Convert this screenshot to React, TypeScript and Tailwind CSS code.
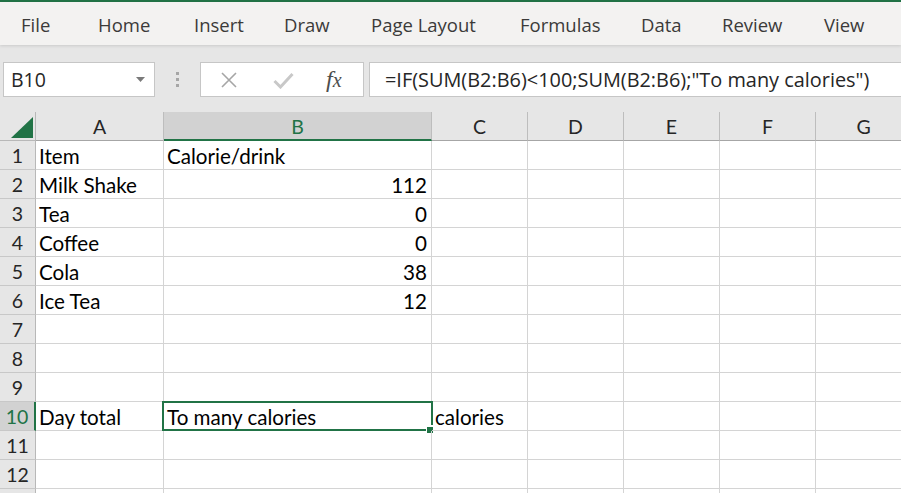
import React from "react";

const UI = { fontFamily: '"Open Sans", "Noto Sans", sans-serif' };
const CELL = { fontFamily: 'Lato, "Noto Sans", sans-serif' };

const tabs: [string, number][] = [
  ["File", 77],
  ["Home", 96],
  ["Insert", 90],
  ["Draw", 87],
  ["Page Layout", 149],
  ["Formulas", 121],
  ["Data", 81],
  ["Review", 102],
  ["View", 60],
];

const colW: Record<string, string> = {
  A: "w-[128px]",
  B: "w-[268px]",
  C: "w-[96px]",
  D: "w-[96px]",
  E: "w-[96px]",
  F: "w-[96px]",
  G: "w-[96px]",
};
const cols = ["A", "B", "C", "D", "E", "F", "G"];

type Row = { a?: string; b?: string; bNum?: boolean; c?: string };
const rows: Row[] = [
  { a: "Item", b: "Calorie/drink" },
  { a: "Milk Shake", b: "112", bNum: true },
  { a: "Tea", b: "0", bNum: true },
  { a: "Coffee", b: "0", bNum: true },
  { a: "Cola", b: "38", bNum: true },
  { a: "Ice Tea", b: "12", bNum: true },
  {},
  {},
  {},
  { a: "Day total", b: "To many calories", c: "calories" },
  {},
  {},
  {},
];

export default function App() {
  return (
    <div className="w-[901px] h-[493px] overflow-hidden bg-white flex flex-col">
      {/* top accent */}
      <div className="h-[2px] bg-[#217346] shrink-0" />
      {/* ribbon tabs */}
      <div
        className="h-[43px] shrink-0 bg-[#f3f2f1] flex items-center pl-[21px] pt-[3px] text-[18.5px] text-[#3b3a39] relative z-10 shadow-[0_1px_3px_rgba(0,0,0,0.12)]"
        style={UI}
      >
        {tabs.map(([t, w]) => (
          <div key={t} className="shrink-0 whitespace-nowrap" style={{ width: w }}>
            {t}
          </div>
        ))}
      </div>
      {/* formula bar */}
      <div className="h-[67px] shrink-0 bg-[#e6e6e6] flex items-start pt-[17px] pl-[3px]" style={UI}>
        <div className="w-[152px] h-[35px] bg-white border border-[#c6c6c6] flex items-center justify-between pl-[7px] pr-[9px] shrink-0">
          <span className="text-[19.5px] text-[#262626]">B10</span>
          <svg width="9" height="5" viewBox="0 0 9 5">
            <path d="M0 0 L9 0 L4.5 5 Z" fill="#7a7a7a" />
          </svg>
        </div>
        <div className="w-[45px] h-[35px] flex flex-col items-center justify-center gap-[3px] shrink-0">
          <div className="w-[3px] h-[3px] bg-[#a6a6a6]" />
          <div className="w-[3px] h-[3px] bg-[#a6a6a6]" />
          <div className="w-[3px] h-[3px] bg-[#a6a6a6]" />
        </div>
        <div className="w-[164px] h-[35px] bg-white border border-[#c6c6c6] flex items-center shrink-0 relative">
          <svg className="absolute left-[20px] top-[9px]" width="16" height="16" viewBox="0 0 16 16">
            <path d="M1 1 L15 15 M15 1 L1 15" stroke="#a6a6a6" strokeWidth="1.6" fill="none" />
          </svg>
          <svg className="absolute left-[72px] top-[9px]" width="21" height="17" viewBox="0 0 21 17">
            <path d="M1.5 9 L7.5 15 L19.5 2" stroke="#c8c8c8" strokeWidth="3" fill="none" />
          </svg>
          <span
            className="absolute left-[125px] top-[1px] text-[24px] italic text-[#4d4d4d] leading-[30px]"
            style={{ fontFamily: '"Liberation Serif", "DejaVu Serif", serif' }}
          >
            <span className="italic">f</span>
            <span className="text-[20px]">x</span>
          </span>
        </div>
        <div className="ml-[5px] flex-1 h-[35px] bg-white border border-[#c6c6c6] border-r-0 flex items-center pl-[15px] text-[19.9px] text-[#262626] whitespace-nowrap overflow-hidden">
          =IF(SUM(B2:B6)&lt;100;SUM(B2:B6);"To many calories")
        </div>
      </div>
      {/* sheet */}
      <div className="flex-1 bg-white overflow-hidden" style={CELL}>
        {/* header row */}
        <div className="flex h-[29px] bg-[#e6e6e6]">
          <div className="w-[36px] shrink-0 border-r border-b border-[#b8b8b8] relative">
            <svg className="absolute left-[11px] top-[5px]" width="22" height="21" viewBox="0 0 22 21">
              <path d="M0 21 L22 21 L22 0 Z" fill="#217346" />
            </svg>
          </div>
          {cols.map((c) => {
            const sel = c === "B";
            return (
              <div
                key={c}
                className={`${colW[c]} shrink-0 flex items-center justify-center pt-[2px] text-[19.5px] border-r border-[#bdbdbd] ${
                  sel
                    ? "bg-[#d2d2d2] text-[#217346] border-b-2 border-b-[#217346]"
                    : "text-[#262626] border-b border-b-[#a6a6a6]"
                }`}
              >
                {c}
              </div>
            );
          })}
          <div className="flex-1 border-b border-b-[#a6a6a6]" />
        </div>
        {rows.map((r, i) => {
          const n = i + 1;
          const sel = n === 10;
          return (
            <div key={n} className="flex h-[29px]">
              <div
                className={`w-[36px] shrink-0 flex items-center justify-center pt-[2px] text-[19.5px] border-b border-b-[#c8c8c8] ${
                  sel
                    ? "bg-[#d2d2d2] text-[#217346] border-r-2 border-r-[#217346]"
                    : "bg-[#e6e6e6] text-[#262626] border-r border-r-[#b8b8b8]"
                }`}
              >
                {n < 13 ? n : ""}
              </div>
              {cols.map((c) => {
                let content: string | undefined;
                let right = false;
                if (c === "A") content = r.a;
                if (c === "B") {
                  content = r.b;
                  right = !!r.bNum;
                }
                if (c === "C") content = r.c;
                const isSel = sel && c === "B";
                return (
                  <div
                    key={c}
                    className={`${colW[c]} shrink-0 border-r border-b border-[#d4d4d4] flex items-center pt-[3px] text-[20.6px] text-black whitespace-nowrap relative ${
                      right ? "justify-end pr-[4px]" : "pl-[3px]"
                    }`}
                  >
                    {content}
                    {isSel && (
                      <>
                        <div className="absolute left-[-2px] top-[-1px] right-[-2px] bottom-[-1px] border-2 border-[#217346] pointer-events-none" />
                        <div className="absolute right-[-3px] bottom-[-3px] w-[8px] h-[8px] bg-white pointer-events-none" />
                        <div className="absolute right-[-2px] bottom-[-3px] w-[6px] h-[6px] bg-[#217346] pointer-events-none" />
                      </>
                    )}
                  </div>
                );
              })}
              <div className="flex-1 border-b border-[#d4d4d4]" />
            </div>
          );
        })}
      </div>
    </div>
  );
}
